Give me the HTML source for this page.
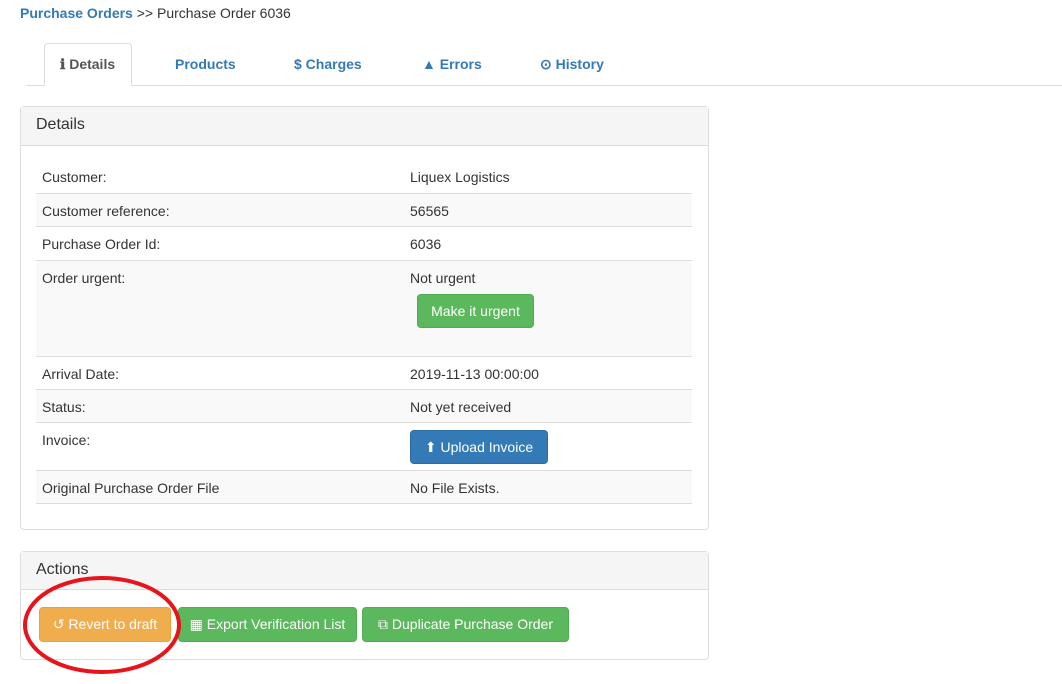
<!DOCTYPE html>
<html><head><style>
*{box-sizing:border-box;margin:0;padding:0}
body{width:1062px;height:684px;background:#fff;font-family:"Liberation Sans",sans-serif;font-size:14px;color:#333;position:relative;overflow:hidden}
.a{position:absolute}
.tab{position:absolute;top:56px;font-weight:bold;color:#337ab7;font-size:14px}
.panel{position:absolute;left:20px;width:689px;border:1px solid #ddd;border-radius:4px;background:#fff}
.ph{background:#f5f5f5;border-bottom:1px solid #ddd;height:39px;padding:9px 15px;font-size:16px}
.row{position:absolute;left:36px;width:656px;border-top:1px solid #ddd}
.row span{position:absolute;top:9px}
.row .l{left:6px}.row .r{left:374px}
.st{background:#f9f9f9}
.btn{position:absolute;color:#fff;border-radius:4px;font-size:14px;display:flex;align-items:center;justify-content:center}
.g{background:#5cb85c;border:1px solid #4cae4c}
</style></head><body>
<div class="a" style="left:20px;top:5px"><b style="color:#337ab7">Purchase Orders</b> &gt;&gt; Purchase Order 6036</div>
<div class="a" style="left:26px;top:85px;width:1036px;border-top:1px solid #ddd"></div>
<div class="a" style="left:44px;top:43px;width:88px;height:43px;border:1px solid #ddd;border-bottom:none;border-radius:4px 4px 0 0;background:#fff"></div>
<div class="tab" style="left:60px;color:#555">ℹ Details</div>
<div class="tab" style="left:175px">Products</div>
<div class="tab" style="left:294px">$ Charges</div>
<div class="tab" style="left:422px">▲ Errors</div>
<div class="tab" style="left:540px">⊙ History</div>

<div class="panel" style="top:106px;height:424px"><div class="ph">Details</div></div>
<div class="row" style="top:160px;height:33px;border-top:none"><span class="l">Customer:</span><span class="r">Liquex Logistics</span></div>
<div class="row st" style="top:193px;height:33px"><span class="l">Customer reference:</span><span class="r">56565</span></div>
<div class="row" style="top:226px;height:34px"><span class="l">Purchase Order Id:</span><span class="r">6036</span></div>
<div class="row st" style="top:260px;height:96px"><span class="l">Order urgent:</span><span class="r">Not urgent</span></div>
<div class="row" style="top:356px;height:33px"><span class="l">Arrival Date:</span><span class="r">2019-11-13 00:00:00</span></div>
<div class="row st" style="top:389px;height:33px"><span class="l">Status:</span><span class="r">Not yet received</span></div>
<div class="row" style="top:422px;height:48px"><span class="l">Invoice:</span></div>
<div class="row st" style="top:470px;height:34px;border-bottom:1px solid #ddd"><span class="l">Original Purchase Order File</span><span class="r">No File Exists.</span></div>
<div class="btn g" style="left:417px;top:294px;width:117px;height:34px">Make it urgent</div>
<div class="btn" style="left:410px;top:430px;width:138px;height:34px;background:#337ab7;border:1px solid #2e6da4">⬆ Upload Invoice</div>

<div class="panel" style="top:551px;height:109px"><div class="ph" style="height:38px;padding-top:9px">Actions</div></div>
<div class="btn" style="left:39px;top:607px;width:132px;height:35px;background:#f0ad4e;border:1px solid #eea236">↺ Revert to draft</div>
<div class="btn g" style="left:178px;top:607px;width:179px;height:35px">▦ Export Verification List</div>
<div class="btn g" style="left:362px;top:607px;width:207px;height:35px">⧉ Duplicate Purchase Order</div>
<svg class="a" style="left:0;top:0" width="1062" height="684"><ellipse cx="102" cy="625" rx="77" ry="47" fill="none" stroke="#e8141c" stroke-width="4"/></svg>
</body></html>
